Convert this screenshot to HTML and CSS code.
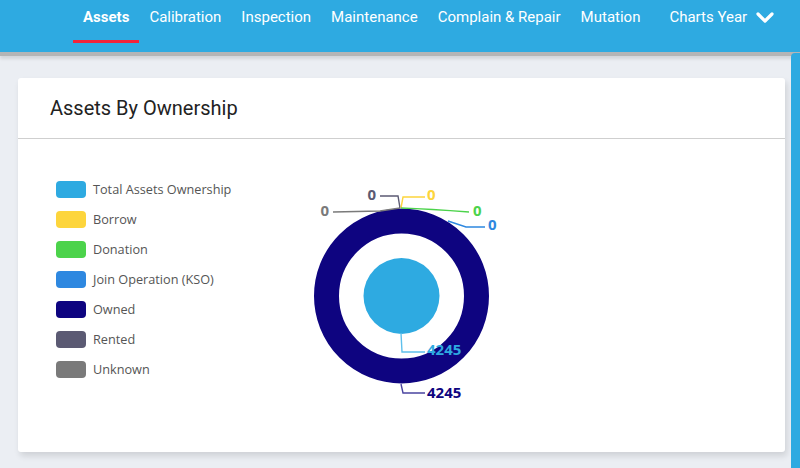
FILE: index.html
```html
<!DOCTYPE html>
<html>
<head>
<meta charset="utf-8">
<link rel="stylesheet" href="styles.css">
</head>
<body>
<header class="topbar">
  <nav class="nav">
    <a class="nav-item active">Assets</a>
    <a class="nav-item">Calibration</a>
    <a class="nav-item">Inspection</a>
    <a class="nav-item">Maintenance</a>
    <a class="nav-item">Complain &amp; Repair</a>
    <a class="nav-item">Mutation</a>
    <a class="nav-item year">Charts Year
      <svg class="chev" width="20" height="14" viewBox="0 0 20 14"><path d="M3 3 L10 10 L17 3" fill="none" stroke="#fff" stroke-width="3.2" stroke-linecap="round" stroke-linejoin="round"/></svg>
    </a>
  </nav>
</header>
<div class="side-tab"></div>
<main class="main">
  <section class="card">
    <div class="card-head">Assets By Ownership</div>
    <div class="card-body">
      <ul class="legend">
        <li class="legend-row"><span class="sw c-total"></span>Total Assets Ownership</li>
        <li class="legend-row"><span class="sw c-borrow"></span>Borrow</li>
        <li class="legend-row"><span class="sw c-donation"></span>Donation</li>
        <li class="legend-row"><span class="sw c-kso"></span>Join Operation (KSO)</li>
        <li class="legend-row"><span class="sw c-owned"></span>Owned</li>
        <li class="legend-row"><span class="sw c-rented"></span>Rented</li>
        <li class="legend-row"><span class="sw c-unknown"></span>Unknown</li>
      </ul>
      <svg class="chart" width="240" height="240" viewBox="0 0 240 240">
        <circle cx="121.5" cy="121" r="75" fill="none" stroke="#0e0480" stroke-width="25"/>
        <circle cx="121.5" cy="121" r="38" fill="#2eaae1"/>
        <g fill="none" stroke-width="1.4">
          <polyline points="53,37 100,36 120,33" stroke="#7a7a7a"/>
          <polyline points="100,21 118,21 120,33" stroke="#5b5a73"/>
          <polyline points="121,33 123,22 145,22" stroke="#fdd53c"/>
          <path d="M121,33 Q150,34 189,37" stroke="#4cd34b"/>
          <polyline points="168,46 186,52 205,52" stroke="#2e88e0"/>
          <polyline points="121,158 122,177 145,177" stroke="#5fc0ec"/>
          <polyline points="121,209 123,218 145,218" stroke="#4a44a0"/>
        </g>
        <g class="lbl">
          <text x="49" y="37" text-anchor="end" fill="#7a7a7a">0</text>
          <text x="96" y="21" text-anchor="end" fill="#5b5a73">0</text>
          <text x="147" y="21" fill="#fdd53c">0</text>
          <text x="193" y="37" fill="#4cd34b">0</text>
          <text x="208" y="51" fill="#2e88e0">0</text>
          <text x="147" y="176" fill="#2eaae1">4245</text>
          <text x="147" y="219" fill="#0e0480">4245</text>
        </g>
      </svg>
    </div>
  </section>
</main>
</body>
</html>
```
FILE: styles.css
```css
* { box-sizing: border-box; }
html, body { margin: 0; padding: 0; }
body {
  background: #ebeef3;
  font-family: Roboto, "Liberation Sans", sans-serif;
  width: 800px;
  height: 468px;
  overflow: hidden;
  position: relative;
}
.topbar {
  height: 52px;
  background: #2eaae1;
  box-shadow: 0 4px 0 #b4b5b6, 0 7px 3px rgba(0,0,0,0.10);
  position: relative;
  z-index: 2;
}
.nav {
  display: flex;
  align-items: flex-start;
  padding-left: 73px;
  height: 100%;
}
.nav-item {
  color: #fff;
  font-size: 15px;
  padding: 7px 10px 0;
  height: 43px;
  line-height: 20px;
  white-space: nowrap;
}
.nav-item.active {
  font-weight: 700;
  border-bottom: 3px solid #f2243a;
}
.nav-item.year {
  margin-left: 9px;
  display: flex;
  align-items: flex-start;
}
.chev { margin-left: 8px; margin-top: 4px; }
.side-tab {
  position: absolute;
  right: 0;
  top: 53px;
  width: 9px;
  bottom: 0;
  background: #2eaae1;
  border-top-left-radius: 4px;
  z-index: 3;
}
.main {
  padding: 26px 15px 0 18px;
}
.card {
  background: #fff;
  border-radius: 3px;
  box-shadow: 2px 4px 6px rgba(0,0,0,0.12);
}
.card-head {
  height: 61px;
  padding: 18px 0 0 32px;
  font-size: 20px;
  line-height: 24px;
  color: #222;
  border-bottom: 1px solid #cfcfcf;
}
.card-body {
  display: flex;
  align-items: flex-start;
  height: 313px;
  padding: 35px 0 0 38px;
}
.legend {
  list-style: none;
  margin: 0;
  padding: 0;
  width: 224px;
}
.legend-row {
  height: 30px;
  display: flex;
  align-items: center;
  font-family: "Open Sans", "Noto Sans", sans-serif;
  font-size: 12.7px;
  color: #555;
}
.sw {
  width: 30px;
  height: 17px;
  border-radius: 4px;
  margin-right: 7px;
}
.c-total { background: #2eaae1; }
.c-borrow { background: #fdd53c; }
.c-donation { background: #4cd34b; }
.c-kso { background: #2e88e0; }
.c-owned { background: #0e0480; }
.c-rented { background: #5b5a73; }
.c-unknown { background: #7a7a7a; }
.chart { display: block; margin-top: 1px; }
.lbl text {
  font-family: "Open Sans", "Noto Sans", sans-serif;
  font-weight: 700;
  font-size: 15px;
  dominant-baseline: middle;
}
```
